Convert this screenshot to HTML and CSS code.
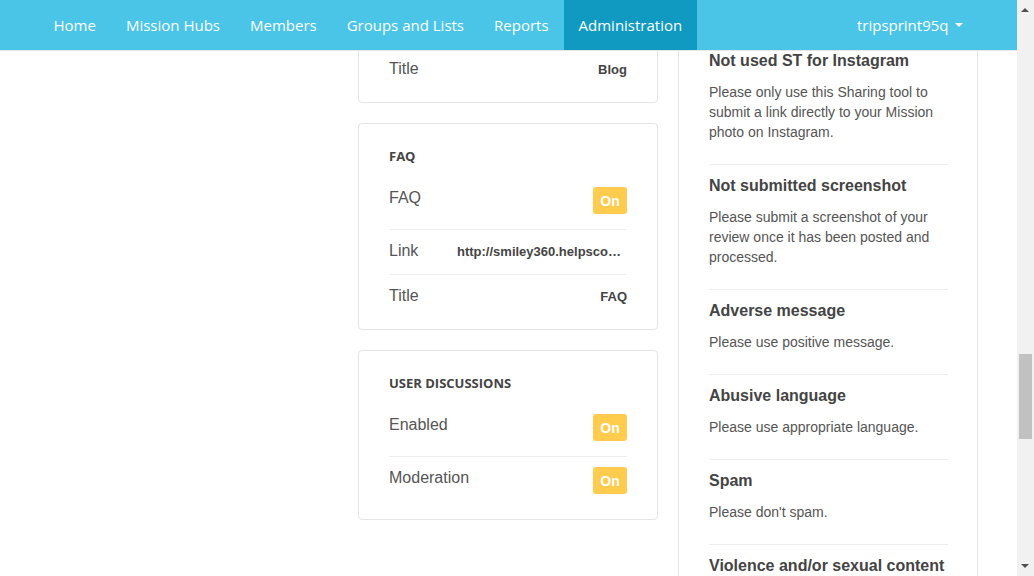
FILE: index.html
```html
<!DOCTYPE html>
<html>
<head>
<meta charset="utf-8">
<link rel="stylesheet" href="styles.css">
</head>
<body>
<div class="page">
  <nav class="navbar">
    <div class="nav-inner">
      <ul class="nav-left">
        <li><a href="#">Home</a></li>
        <li><a href="#">Mission Hubs</a></li>
        <li><a href="#">Members</a></li>
        <li><a href="#">Groups and Lists</a></li>
        <li><a href="#">Reports</a></li>
        <li class="active"><a href="#">Administration</a></li>
      </ul>
      <ul class="nav-right">
        <li><a href="#">tripsprint95q <span class="caret"></span></a></li>
      </ul>
    </div>
  </nav>

  <main class="main">
    <div class="left-col">
      <section class="card">
        <h3 class="card-title">BLOG</h3>
        <div class="row"><span class="label">Blog</span><span class="badge">On</span></div>
        <div class="row"><span class="label">Link</span><span class="value">http://smiley360.blog</span></div>
        <div class="row"><span class="label">Title</span><span class="value">Blog</span></div>
      </section>

      <section class="card">
        <h3 class="card-title">FAQ</h3>
        <div class="row"><span class="label">FAQ</span><span class="badge">On</span></div>
        <div class="row"><span class="label">Link</span><span class="value ellipsis">http://smiley360.helpscoutdocs.com</span></div>
        <div class="row"><span class="label">Title</span><span class="value">FAQ</span></div>
      </section>

      <section class="card">
        <h3 class="card-title">USER DISCUSSIONS</h3>
        <div class="row"><span class="label">Enabled</span><span class="badge">On</span></div>
        <div class="row"><span class="label">Moderation</span><span class="badge">On</span></div>
      </section>
    </div>

    <aside class="reasons">
      <div class="reason">
        <h4>Not used ST for Instagram</h4>
        <p>Please only use this Sharing tool to submit a link directly to your Mission photo on Instagram.</p>
      </div>
      <div class="reason">
        <h4>Not submitted screenshot</h4>
        <p>Please submit a screenshot of your review once it has been posted and processed.</p>
      </div>
      <div class="reason">
        <h4>Adverse message</h4>
        <p>Please use positive message.</p>
      </div>
      <div class="reason">
        <h4>Abusive language</h4>
        <p>Please use appropriate language.</p>
      </div>
      <div class="reason">
        <h4>Spam</h4>
        <p>Please don't spam.</p>
      </div>
      <div class="reason">
        <h4>Violence and/or sexual content</h4>
        <p>Please do not post violent or sexual content.</p>
      </div>
    </aside>
  </main>
</div>

<div class="scrollbar">
  <span class="arrow up"></span>
  <span class="thumb"></span>
  <span class="arrow down"></span>
</div>
</body>
</html>
```

FILE: styles.css
```css
* { box-sizing: border-box; }

html, body {
  margin: 0;
  padding: 0;
  height: 100%;
  overflow: hidden;
  background: #fff;
}

body {
  font-family: "Liberation Sans", Arial, sans-serif;
  color: #555;
}

.page {
  width: 1017px;
}

/* NAVBAR */
.navbar {
  position: relative;
  z-index: 5;
  height: 51px;
  background: #4ac5e8;
  border-bottom: 1px solid #e6e6e6;
}

.nav-inner {
  width: 940px;
  margin: 0 auto;
  display: flex;
  justify-content: space-between;
  height: 50px;
}

.nav-left, .nav-right {
  list-style: none;
  margin: 0;
  padding: 0;
  display: flex;
}

.nav-right { margin-right: 1px; }

.navbar a {
  display: flex;
  align-items: center;
  height: 50px;
  padding: 0 15px 1px;
  color: #fff;
  text-decoration: none;
  font-family: "Open Sans", sans-serif;
  font-size: 15px;
}

.nav-right a { padding-left: 17px; }

.nav-left li.active a {
  background: #119ac1;
}

.caret {
  display: inline-block;
  width: 0;
  height: 0;
  margin-left: 6px;
  border-left: 4px solid transparent;
  border-right: 4px solid transparent;
  border-top: 4px solid #fff;
}

/* MAIN */
.main {
  display: flex;
  align-items: flex-start;
  gap: 20px;
  padding-left: 358px;
}

.left-col {
  width: 300px;
  margin-top: -155px;
  display: flex;
  flex-direction: column;
  gap: 20px;
}

.card {
  border: 1px solid #e5e5e5;
  border-radius: 4px;
  padding: 22px 30px 10px;
  background: #fff;
}

.card-title {
  margin: 0 0 11px;
  font-family: "Open Sans", sans-serif;
  font-weight: 700;
  font-size: 13px;
  line-height: 20px;
  color: #444;
}

.row {
  display: flex;
  justify-content: space-between;
  align-items: flex-start;
  padding: 10px 0 12px;
  border-top: 1px solid #eee;
}

.card-title + .row { border-top: 0; }

.row .label {
  font-size: 16px;
  line-height: 22px;
  color: #555;
}

.row .value {
  font-size: 13px;
  font-weight: 700;
  line-height: 21px;
  padding-top: 1px;
  color: #444;
}

.row .value.ellipsis {
  max-width: 170px;
  white-space: nowrap;
  overflow: hidden;
  text-overflow: ellipsis;
}

.badge {
  display: flex;
  align-items: center;
  justify-content: center;
  width: 34px;
  height: 27px;
  margin-bottom: 3px;
  border-radius: 3px;
  background: #ffcc4d;
  color: #fff;
  font-weight: 700;
  font-size: 14px;
}

/* REASONS */
.reasons {
  width: 300px;
  margin-top: -12px;
  border: 1px solid #e5e5e5;
  border-radius: 4px;
  padding: 0 29px 0 30px;
}

.reason {
  padding: 11px 0 22px;
  border-top: 1px solid #eee;
}

.reason:first-child { border-top: 0; }

.reason h4 {
  margin: 0 0 11px;
  font-size: 16px;
  line-height: 20px;
  font-weight: 700;
  color: #444;
}

.reason p {
  margin: 0;
  font-size: 14px;
  line-height: 20px;
  color: #555;
}

/* SCROLLBAR */
.scrollbar {
  position: fixed;
  top: 0;
  right: 0;
  width: 17px;
  height: 576px;
  background: #f1f1f1;
}

.thumb {
  position: absolute;
  left: 2px;
  top: 354px;
  width: 13px;
  height: 85px;
  background: #c1c1c1;
}

.arrow {
  position: absolute;
  left: 4px;
  width: 0;
  height: 0;
  border-left: 4px solid transparent;
  border-right: 4px solid transparent;
}

.arrow.up {
  top: 8px;
  border-bottom: 4px solid #505050;
}

.arrow.down {
  bottom: 8px;
  border-top: 4px solid #505050;
}
```
